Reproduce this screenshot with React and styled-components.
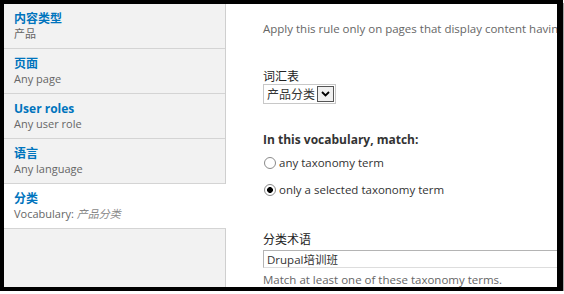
import React from "react";
import styled, { createGlobalStyle } from "styled-components";

const Global = createGlobalStyle`
  html, body { margin: 0; padding: 0; background: #fff; }
  body { font-family: "Open Sans", "Noto Sans CJK SC", sans-serif; }
  * { box-sizing: border-box; }
`;

const Frame = styled.div`
  width: 563px;
  height: 291px;
  border-style: solid;
  border-color: #000;
  border-width: 4px 6px 4px 4px;
  box-shadow: 3px 3px 0 #a6a6a6;
  display: flex;
  overflow: hidden;
  background: #fff;
`;

const Sidebar = styled.ul`
  list-style: none;
  margin: 0;
  padding: 0;
  width: 222px;
  flex: none;
  background: #f2f2f2;
  border-right: 1px solid #cfcfcf;
`;

const Tab = styled.li`
  height: 45px;
  padding: 7px 10px 0;
  border-bottom: 1px solid #d4d4d4;
  background: ${(p) => (p.$selected ? "#fff" : "transparent")};
  margin-right: ${(p) => (p.$selected ? "-1px" : "0")};
`;

const TabTitle = styled.div`
  font-size: 12px;
  line-height: 15px;
  font-weight: 700;
  color: #0074bd;
`;

const TabSummary = styled.div`
  font-size: 11px;
  line-height: 15px;
  color: #666;
  em {
    font-style: italic;
    color: #888;
  }
`;

const Pane = styled.div`
  flex: 1;
  min-width: 0;
  padding: 17px 0 0 37px;
  color: #333;
`;

const Description = styled.div`
  font-size: 11.5px;
  line-height: 15px;
  color: #666;
  white-space: nowrap;
  margin-top: ${(p) => p.$top || 0}px;
`;

const Field = styled.div`
  margin-top: ${(p) => p.$top || 0}px;
`;

const Label = styled.div`
  font-size: 12px;
  line-height: 13px;
  color: #222;
  font-family: "Noto Sans CJK SC", sans-serif;
`;

const BoldLabel = styled.div`
  font-size: 12px;
  line-height: 15px;
  font-weight: 700;
  color: #333;
`;

const SelectBox = styled.div`
  display: inline-flex;
  align-items: center;
  height: 20px;
  border: 1px solid #c8c8c8;
  padding: 0 1px 0 3px;
  gap: 2px;
  background: #fff;
`;

const SelectText = styled.span`
  font-size: 12px;
  line-height: 16px;
  color: #333;
  font-family: "Noto Sans CJK SC", sans-serif;
`;

const ArrowButton = styled.span`
  width: 17px;
  height: 16px;
  border: 1px solid #555;
  background: #f0f0f0;
  display: flex;
  align-items: center;
  justify-content: center;
`;

const RadioRow = styled.label`
  display: flex;
  align-items: center;
  gap: 3px;
  margin-top: ${(p) => p.$top || 0}px;
  font-size: 11.5px;
  line-height: 15px;
  color: #333;
`;

const Radio = styled.input.attrs({ type: "radio" })`
  appearance: none;
  margin: 0 0 0 1px;
  width: 12px;
  height: 12px;
  border-radius: 50%;
  border: 1px solid #8a8a8a;
  background: #fff;
  &:checked {
    background: radial-gradient(circle, #000 0 2.6px, #fff 3.2px);
  }
`;

const TextInput = styled.input.attrs({ type: "text" })`
  display: block;
  margin: 5px 0 0;
  width: 320px;
  height: 18px;
  border: 1px solid #b4b4b4;
  border-bottom-color: #ddd;
  padding: 0 3px;
  font-size: 11.5px;
  color: #333;
  font-family: "Open Sans", "Noto Sans CJK SC", sans-serif;
  outline: none;
`;

const tabs = [
  { title: "内容类型", summary: "产品" },
  { title: "页面", summary: "Any page" },
  { title: "User roles", summary: "Any user role" },
  { title: "语言", summary: "Any language" },
  { title: "分类", summary: "Vocabulary: ", em: "产品分类", selected: true },
];

const Chevron = () => (
  <svg width="9" height="6" viewBox="0 0 9 6">
    <path d="M1 1 L4.5 4.5 L8 1" fill="none" stroke="#000" strokeWidth="1.8" />
  </svg>
);

export default function App() {
  return (
    <>
      <Global />
      <Frame>
        <Sidebar>
          {tabs.map((t) => (
            <Tab key={t.title} $selected={t.selected}>
              <TabTitle>{t.title}</TabTitle>
              <TabSummary>
                {t.summary}
                {t.em && <em>{t.em}</em>}
              </TabSummary>
            </Tab>
          ))}
        </Sidebar>
        <Pane>
          <Description>
            Apply this rule only on pages that display content having the given terms.
          </Description>
          <Field $top={33}>
            <Label>词汇表</Label>
            <SelectBox>
              <SelectText>产品分类</SelectText>
              <ArrowButton>
                <Chevron />
              </ArrowButton>
            </SelectBox>
          </Field>
          <Field $top={28}>
            <BoldLabel>In this vocabulary, match:</BoldLabel>
            <RadioRow $top={8}>
              <Radio name="match" />
              any taxonomy term
            </RadioRow>
            <RadioRow $top={12}>
              <Radio name="match" defaultChecked />
              only a selected taxonomy term
            </RadioRow>
          </Field>
          <Field $top={35}>
            <Label>分类术语</Label>
            <TextInput defaultValue="Drupal培训班" />
            <Description $top={4}>Match at least one of these taxonomy terms.</Description>
          </Field>
        </Pane>
      </Frame>
    </>
  );
}
